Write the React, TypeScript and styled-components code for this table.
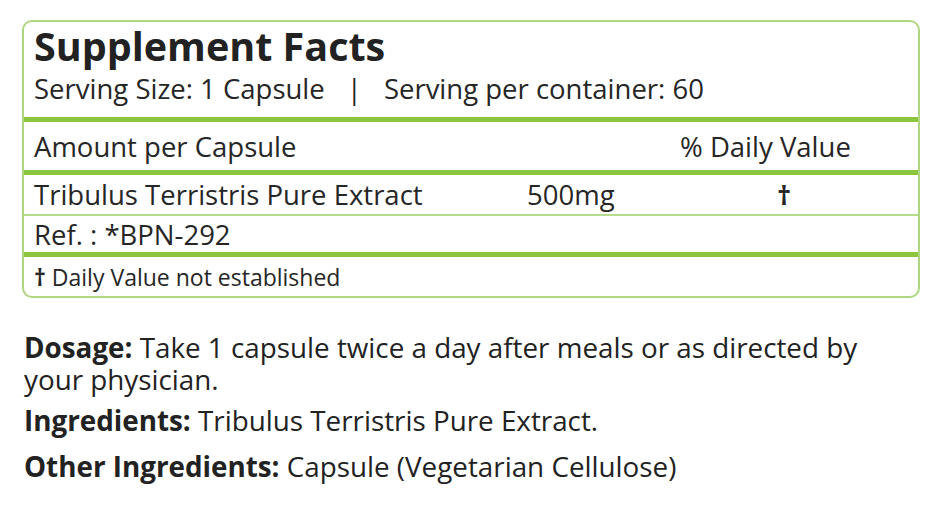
import React from "react";
import styled, { createGlobalStyle } from "styled-components";

const Global = createGlobalStyle`
  html, body {
    margin: 0;
    padding: 0;
    background: #ffffff;
  }
  body {
    font-family: "Open Sans", "Noto Sans", sans-serif;
    color: #262626;
  }
`;

const Page = styled.div`
  width: 946px;
  height: 510px;
  padding: 20px 0 0 22px;
  box-sizing: border-box;
`;

const Panel = styled.div`
  width: 898px;
  border: 2px solid #aed77f;
  border-radius: 10px;
  box-sizing: border-box;
  overflow: hidden;
`;

interface RowProps {
  rule?: "thick" | "thin" | "none";
  height: number;
  size?: number;
}

const Row = styled.div<RowProps>`
  display: flex;
  align-items: center;
  height: ${(p) => p.height}px;
  padding: 0 10px;
  font-size: ${(p) => p.size || 27.5}px;
  border-bottom: ${(p) =>
    p.rule === "thick"
      ? "5px solid #8cc63f"
      : p.rule === "thin"
      ? "2px solid #b5dc8a"
      : "none"};
`;

const Header = styled.div`
  display: flex;
  flex-direction: column;
  padding: 0 10px;
  border-bottom: 5px solid #8cc63f;
  height: 100px;
  box-sizing: border-box;
`;

const Title = styled.div`
  font-size: 39.5px;
  font-weight: 700;
  line-height: 48px;
  color: #222;
`;

const Serving = styled.div`
  font-size: 27.5px;
  line-height: 38px;
`;

const Divider = styled.span`
  margin: 0 22px;
`;

const Dagger = styled.span`
  font-weight: 700;
`;

interface CellProps {
  width?: number;
}

const Cell = styled.div<CellProps>`
  ${(p) => (p.width ? `width: ${p.width}px;` : "flex: 1;")}
  white-space: nowrap;
`;

const Notes = styled.div`
  padding: 33px 0 0 2px;
  font-size: 27.8px;
  color: #222;
`;

interface NoteProps {
  gap?: number;
}

const Note = styled.p<NoteProps>`
  margin: 0 0 ${(p) => p.gap || 0}px;
  line-height: 32px;
  width: 870px;
`;

const Label = styled.span`
  font-weight: 700;
`;

const App = () => (
  <Page>
    <Global />
    <Panel>
      <Header>
        <Title>Supplement Facts</Title>
        <Serving>
          Serving Size: 1 Capsule<Divider>|</Divider>Serving per container: 60
        </Serving>
      </Header>
      <Row rule="thick" height={48}>
        <Cell width={646}>Amount per Capsule</Cell>
        <Cell>% Daily Value</Cell>
      </Row>
      <Row rule="thin" height={39}>
        <Cell width={493}>Tribulus Terristris Pure Extract</Cell>
        <Cell width={250}>500mg</Cell>
        <Cell>
          <Dagger>†</Dagger>
        </Cell>
      </Row>
      <Row rule="thick" height={36}>
        <Cell>Ref. : *BPN-292</Cell>
      </Row>
      <Row rule="none" height={39} size={23}>
        <Cell>
          <Dagger>†</Dagger> Daily Value not established
        </Cell>
      </Row>
    </Panel>
    <Notes>
      <Note gap={9}>
        <Label>Dosage:</Label> Take 1 capsule twice a day after meals or as directed by your physician.
      </Note>
      <Note gap={14}>
        <Label>Ingredients:</Label> Tribulus Terristris Pure Extract.
      </Note>
      <Note>
        <Label>Other Ingredients:</Label> Capsule (Vegetarian Cellulose)
      </Note>
    </Notes>
  </Page>
);

export default App;
